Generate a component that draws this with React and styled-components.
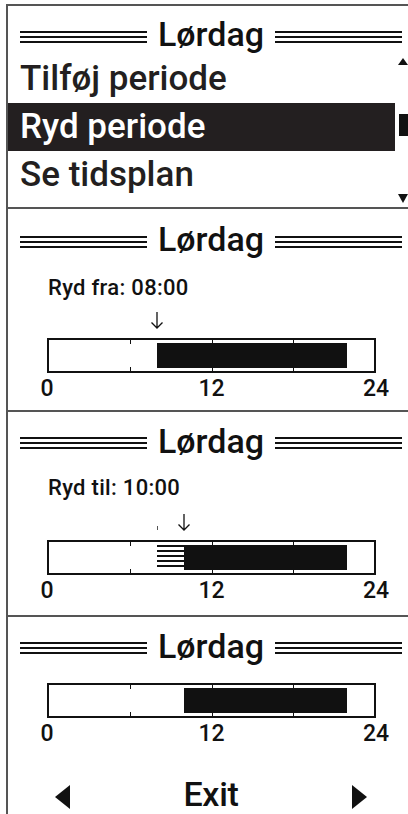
import React from "react";
import styled, { createGlobalStyle } from "styled-components";

const GlobalStyle = createGlobalStyle`
  html, body {
    margin: 0;
    padding: 0;
    background: #fff;
  }
  body {
    font-family: Roboto, "Liberation Sans", Arial, sans-serif;
    color: #111;
  }
  * { box-sizing: border-box; }
`;

const Page = styled.div`
  width: 408px;
  height: 814px;
  overflow: hidden;
  padding: 4px 0 0 6px;
`;

const Screen = styled.div`
  border-left: 2px solid #555;
  display: flex;
  flex-direction: column;
`;

const Panel = styled.section`
  height: ${({ $h }) => $h}px;
  border-top: 2px solid #555;
  overflow: hidden;
  display: flex;
  flex-direction: column;
`;

const Header = styled.div`
  display: flex;
  align-items: center;
  gap: 11px;
  height: 34px;
  margin-top: ${({ $top }) => $top}px;
  padding: 0 6px 0 12px;
`;

const Lines = styled.span`
  flex: 1;
  height: 12px;
  margin-top: 5px;
  background: repeating-linear-gradient(to bottom, #111 0 2px, transparent 2px 5px);
`;

const Title = styled.h2`
  margin: 0;
  font-size: 34px;
  font-weight: 500;
  line-height: 1;
`;

/* menu */
const Menu = styled.div`
  display: grid;
  grid-template-columns: 387px 10px;
  column-gap: 3px;
  margin-top: 4px;
`;

const List = styled.ul`
  list-style: none;
  margin: 0;
  padding: 0;
`;

const Item = styled.li`
  height: 48px;
  line-height: 48px;
  padding-left: 12px;
  font-size: 35px;
  font-weight: 500;
  color: ${({ $active }) => ($active ? "#fff" : "#231f20")};
  background: ${({ $active }) => ($active ? "#231f20" : "transparent")};
`;

const Scroll = styled.div`
  height: 148px;
  display: flex;
  flex-direction: column;
  align-items: center;
  justify-content: space-between;
  padding-top: 3px;
`;

const ArrowUp = styled.span`
  width: 0;
  height: 0;
  border-left: 5px solid transparent;
  border-right: 5px solid transparent;
  border-bottom: 7px solid #111;
`;

const ArrowDown = styled(ArrowUp)`
  border-bottom: 0;
  border-top: 9px solid #111;
`;

const Thumb = styled.span`
  width: 9px;
  height: 22px;
  background: #111;
  margin-bottom: 10px;
`;

/* timeline */
const Chart = styled.div`
  margin: ${({ $top }) => $top}px 32px 0 39px;
`;

const Label = styled.div`
  font-size: 22px;
  line-height: 22px;
  font-weight: 500;
  letter-spacing: 0.3px;
  color: #111;
  margin-top: ${({ $top }) => $top}px;
  padding-left: 40px;
`;

const Markers = styled.div`
  position: relative;
  height: ${({ $h }) => $h}px;
`;

const Pointer = styled.svg`
  position: absolute;
  bottom: 9px;
  transform: translateX(-50%);
`;

const StartMark = styled.span`
  position: absolute;
  bottom: 10px;
  width: 1px;
  height: 4px;
  background: #555;
`;

const Bar = styled.div`
  position: relative;
  height: 35px;
  border: 2px solid #111;
`;

const Tick = styled.span`
  position: absolute;
  width: 1px;
  height: 4px;
  background: #111;
  ${({ $bottom }) => ($bottom ? "bottom: 0;" : "top: 0;")}
`;

const Fill = styled.span`
  position: absolute;
  top: 3px;
  bottom: 3px;
  background: ${({ $striped }) =>
    $striped
      ? "repeating-linear-gradient(to bottom, #111 0 2.5px, #fff 2.5px 5px)"
      : "#111"};
`;

const Scale = styled.div`
  display: flex;
  justify-content: space-between;
  margin: 5px -14px 0 -14px;
`;

const ScaleNum = styled.span`
  width: 28px;
  text-align: center;
  font-size: 23px;
  line-height: 22px;
  font-weight: 500;
  white-space: nowrap;
`;

const Nav = styled.div`
  display: flex;
  align-items: center;
  justify-content: space-between;
  height: 34px;
  margin-top: 32px;
  padding: 0 41px 0 47px;
`;

const NavLeft = styled.span`
  width: 0;
  height: 0;
  margin-top: 6px;
  border-top: 12.5px solid transparent;
  border-bottom: 12.5px solid transparent;
  border-right: 15px solid #111;
`;

const NavRight = styled(NavLeft)`
  border-right: 0;
  border-left: 15px solid #111;
`;

const Exit = styled.span`
  font-size: 34px;
  line-height: 34px;
  font-weight: 500;
  letter-spacing: -0.3px;
`;

const pct = (h) => `${(h / 24) * 100}%`;

const DownArrow = ({ at }) => (
  <Pointer width="14" height="17" viewBox="0 0 14 17" style={{ left: pct(at) }}>
    <path d="M7 0 V16 M1.5 10.5 L7 16 L12.5 10.5" fill="none" stroke="#111" strokeWidth="1.3" />
  </Pointer>
);

const Timeline = ({ top, periods }) => (
  <Chart $top={top}>
    <Bar>
      {[6, 12, 18].map((h) => (
        <React.Fragment key={h}>
          <Tick style={{ left: pct(h) }} />
          <Tick $bottom style={{ left: pct(h) }} />
        </React.Fragment>
      ))}
      {periods.map((p) => (
        <Fill
          key={p.from}
          $striped={p.striped}
          style={{ left: pct(p.from), width: pct(p.to - p.from) }}
        />
      ))}
    </Bar>
    <Scale>
      <ScaleNum>0</ScaleNum>
      <ScaleNum>12</ScaleNum>
      <ScaleNum>24</ScaleNum>
    </Scale>
  </Chart>
);

const DayHeader = ({ top }) => (
  <Header $top={top}>
    <Lines />
    <Title>Lørdag</Title>
    <Lines />
  </Header>
);

export default function App() {
  return (
    <>
      <GlobalStyle />
      <Page>
        <Screen>
          <Panel $h={203}>
            <DayHeader top={11} />
            <Menu>
              <List>
                <Item>Tilføj periode</Item>
                <Item $active>Ryd periode</Item>
                <Item>Se tidsplan</Item>
              </List>
              <Scroll>
                <ArrowUp />
                <Thumb />
                <ArrowDown />
              </Scroll>
            </Menu>
          </Panel>

          <Panel $h={203}>
            <DayHeader top={13} />
            <Label $top={21}>Ryd fra: 08:00</Label>
            <Chart $top={0}>
              <Markers $h={39}>
                <DownArrow at={8} />
              </Markers>
            </Chart>
            <Timeline top={0} periods={[{ from: 8, to: 22 }]} />
          </Panel>

          <Panel $h={205}>
            <DayHeader top={11.5} />
            <Label $top={19.5}>Ryd til: 10:00</Label>
            <Chart $top={0}>
              <Markers $h={41}>
                <StartMark style={{ left: pct(8) }} />
                <DownArrow at={10} />
              </Markers>
            </Chart>
            <Timeline
              top={0}
              periods={[
                { from: 8, to: 10, striped: true },
                { from: 10, to: 22 },
              ]}
            />
          </Panel>

          <Panel $h={199}>
            <DayHeader top={11.5} />
            <Timeline top={20.5} periods={[{ from: 10, to: 22 }]} />
            <Nav>
              <NavLeft />
              <Exit>Exit</Exit>
              <NavRight />
            </Nav>
          </Panel>
        </Screen>
      </Page>
    </>
  );
}
